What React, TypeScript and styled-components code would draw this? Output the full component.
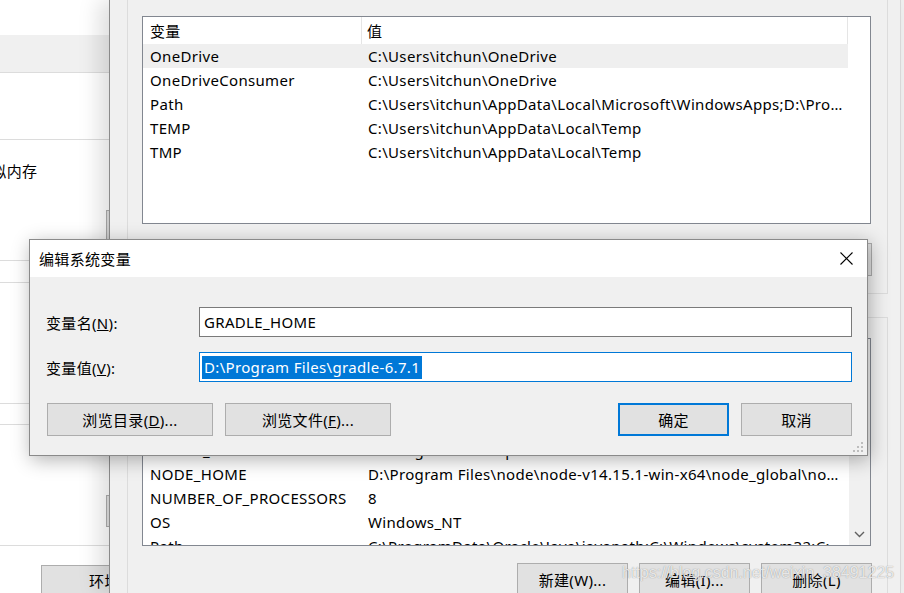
import styled, { createGlobalStyle } from 'styled-components';

const GlobalStyle = createGlobalStyle`
  html, body {
    margin: 0;
    padding: 0;
    background: #f0f0f0;
  }
  body {
    font-family: "Noto Sans", "Noto Sans CJK SC", sans-serif;
    font-size: 15px;
    letter-spacing: 0.33px;
    color: #000;
  }
  * {
    box-sizing: border-box;
  }
`;

const Desktop = styled.div`
  position: relative;
  width: 904px;
  height: 593px;
  overflow: hidden;
  background: #f0f0f0;
`;

// ---- system properties window, mostly hidden on the left ----
const BackWindow = styled.div`
  position: absolute;
  left: 0;
  top: 0;
  width: 110px;
  height: 593px;
  background: #fff;
  overflow: hidden;
  display: flex;
  flex-direction: column;
`;

const Strip = styled.div<{ $h: number; $gray?: boolean; $line?: boolean; $pt?: number }>`
  flex: none;
  height: ${(p) => p.$h}px;
  padding-top: ${(p) => p.$pt ?? 0}px;
  background: ${(p) => (p.$gray ? '#f0f0f0' : 'transparent')};
  border-bottom: ${(p) => (p.$line ? '1px solid #dcdcdc' : 'none')};
  display: flex;
  align-items: ${(p) => (p.$pt ? 'flex-start' : 'center')};
  white-space: nowrap;
`;

const BackText = styled.span`
  margin-left: -24px;
`;

const EdgeButton = styled.div<{ $h: number }>`
  flex: none;
  margin-left: 106px;
  width: 90px;
  height: ${(p) => p.$h}px;
  border: 1px solid #adadad;
  background: #e1e1e1;
`;

const BackButton = styled.div`
  flex: none;
  margin-left: 41px;
  width: 192px;
  height: 30px;
  border: 1px solid #adadad;
  background: #e1e1e1;
  display: flex;
  align-items: center;
  justify-content: center;
`;

// ---- environment variables window ----
const EnvWindow = styled.div`
  position: absolute;
  left: 109px;
  top: 0;
  width: 792px;
  height: 593px;
  background: #f0f0f0;
  border-left: 1px solid #8a8a8a;
  border-right: 1px solid #d8d8d8;
  box-shadow: -10px 0 20px rgba(0, 0, 0, 0.13);
  padding: 0 12px 0 17px;
  display: flex;
  flex-direction: column;
`;

const Group = styled.div<{ $mt: number; $pt: number; $h?: number }>`
  position: relative;
  flex: none;
  margin-top: ${(p) => p.$mt}px;
  padding: ${(p) => p.$pt}px 16px 0 14px;
  height: ${(p) => (p.$h ? `${p.$h}px` : 'auto')};
  border: 1px solid #dcdcdc;
  display: flex;
  flex-direction: column;
`;

const Legend = styled.span`
  position: absolute;
  top: -16px;
  left: 10px;
  padding: 0 3px;
  background: #f0f0f0;
  white-space: nowrap;
`;

const ListBox = styled.div`
  flex: none;
  height: 208px;
  border: 1px solid #828790;
  background: #fff;
  overflow: hidden;
  display: flex;
`;

const ListBody = styled.div`
  flex: 1;
  min-width: 0;
  display: flex;
  flex-direction: column;
`;

const HeaderRow = styled.div`
  flex: none;
  display: flex;
  height: 27px;
  width: 705px;
`;

const HeaderCell = styled.div<{ $w: number; $pl: number }>`
  flex: none;
  width: ${(p) => p.$w}px;
  padding-left: ${(p) => p.$pl}px;
  border-right: 1px solid #e5e5e5;
  display: flex;
  align-items: center;
`;

const Row = styled.div<{ $active?: boolean }>`
  flex: none;
  display: flex;
  height: 24px;
  width: 705px;
  background: ${(p) => (p.$active ? '#efefef' : 'transparent')};
`;

const Cell = styled.div<{ $w: number; $pl: number }>`
  flex: none;
  width: ${(p) => p.$w}px;
  padding: 0 4px 0 ${(p) => p.$pl}px;
  line-height: 24px;
  white-space: nowrap;
  overflow: hidden;
  text-overflow: ellipsis;
`;

const ScrollBar = styled.div`
  flex: none;
  width: 21px;
  background: #f0f0f0;
  display: flex;
  flex-direction: column;
  justify-content: flex-end;
  align-items: center;
`;

const ScrollArrow = styled.div`
  height: 22px;
  width: 21px;
  display: flex;
  align-items: center;
  justify-content: center;
`;

const ButtonRow = styled.div<{ $mt: number }>`
  flex: none;
  display: flex;
  justify-content: flex-end;
  gap: 11px;
  margin-top: ${(p) => p.$mt}px;
  margin-right: -1px;
`;

const WinButton = styled.div<{ $w: number; $primary?: boolean }>`
  flex: none;
  width: ${(p) => p.$w}px;
  height: 33px;
  border: ${(p) => (p.$primary ? '2px solid #0078d7' : '1px solid #adadad')};
  background: #e1e1e1;
  display: flex;
  align-items: center;
  justify-content: center;
  white-space: nowrap;
`;

// ---- edit dialog ----
const Dialog = styled.div`
  position: absolute;
  left: 29px;
  top: 239px;
  width: 839px;
  height: 217px;
  border: 1px solid #8a8a8a;
  background: #f0f0f0;
  box-shadow: 2px 4px 18px rgba(0, 0, 0, 0.3);
  display: flex;
  flex-direction: column;
`;

const TitleBar = styled.div`
  flex: none;
  height: 37px;
  background: #fff;
  display: flex;
  align-items: center;
  justify-content: space-between;
  padding: 0 14px 0 9px;
`;

const DialogBody = styled.div`
  flex: 1;
  padding: 30px 15px 0 16px;
  display: flex;
  flex-direction: column;
  gap: 15px;
`;

const FormRow = styled.div`
  display: grid;
  grid-template-columns: 153px 1fr;
  align-items: center;
  height: 30px;
`;

const Field = styled.div<{ $focused?: boolean }>`
  height: 30px;
  border: 1px solid ${(p) => (p.$focused ? '#0078d7' : '#7a7a7a')};
  background: #fff;
  padding-left: 4px;
  display: flex;
  align-items: center;
  white-space: nowrap;
`;

const Selected = styled.span`
  margin-left: -2px;
  padding: 0 2px;
  line-height: 23px;
  background: #0078d7;
  color: #fff;
`;

const DialogButtons = styled.div`
  display: flex;
  gap: 12px;
  margin-top: 6px;
  padding-left: 1px;
`;

const Spacer = styled.div`
  flex: 1;
`;

const Grip = styled.svg`
  position: absolute;
  right: 3px;
  bottom: 2px;
`;

const Watermark = styled.div`
  position: absolute;
  left: 622px;
  top: 564px;
  font-family: "Liberation Sans", Arial, sans-serif;
  font-size: 16px;
  letter-spacing: 0;
  color: rgba(255, 255, 255, 0.8);
  text-shadow: 0 0 1px rgba(90, 90, 90, 0.7);
  white-space: nowrap;
  pointer-events: none;
`;

type Variable = { name: string; value: string };

const userVars: Variable[] = [
  { name: 'OneDrive', value: 'C:\\Users\\itchun\\OneDrive' },
  { name: 'OneDriveConsumer', value: 'C:\\Users\\itchun\\OneDrive' },
  {
    name: 'Path',
    value:
      'C:\\Users\\itchun\\AppData\\Local\\Microsoft\\WindowsApps;D:\\Program Files\\Microsoft VS Code\\bin',
  },
  { name: 'TEMP', value: 'C:\\Users\\itchun\\AppData\\Local\\Temp' },
  { name: 'TMP', value: 'C:\\Users\\itchun\\AppData\\Local\\Temp' },
];

const systemVars: Variable[] = [
  { name: 'ComSpec', value: 'C:\\Windows\\system32\\cmd.exe' },
  { name: 'DriverData', value: 'C:\\Windows\\System32\\Drivers\\DriverData' },
  { name: 'JAVA_HOME', value: 'D:\\Program Files\\Java\\jdk1.8.0_271' },
  { name: 'MAVEN_HOME', value: 'D:\\Program Files\\apache-maven-3.6.3' },
  {
    name: 'NODE_HOME',
    value: 'D:\\Program Files\\node\\node-v14.15.1-win-x64\\node_global\\node_modules',
  },
  { name: 'NUMBER_OF_PROCESSORS', value: '8' },
  { name: 'OS', value: 'Windows_NT' },
  {
    name: 'Path',
    value: 'C:\\ProgramData\\Oracle\\Java\\javapath;C:\\Windows\\system32;C:\\Windows;C:\\Windows\\System32\\Wbem',
  },
];

function VarList({ vars, scroll, activeIndex }: { vars: Variable[]; scroll?: boolean; activeIndex?: number }) {
  return (
    <ListBox>
      <ListBody>
        <HeaderRow>
          <HeaderCell $w={219} $pl={7}>变量</HeaderCell>
          <HeaderCell $w={486} $pl={5}>值</HeaderCell>
        </HeaderRow>
        {vars.map((v, i) => (
          <Row key={v.name + i} $active={i === activeIndex}>
            <Cell $w={219} $pl={7}>{v.name}</Cell>
            <Cell $w={486} $pl={6}>{v.value}</Cell>
          </Row>
        ))}
      </ListBody>
      {scroll && (
        <ScrollBar>
          <ScrollArrow>
            <svg width="11" height="7" viewBox="0 0 11 7">
              <path d="M1 1 L5.5 5.5 L10 1" fill="none" stroke="#606060" strokeWidth="1.4" />
            </svg>
          </ScrollArrow>
        </ScrollBar>
      )}
    </ListBox>
  );
}

export default function App() {
  return (
    <>
      <GlobalStyle />
      <Desktop>
        <BackWindow>
          <Strip $h={35} />
          <Strip $h={38} $gray $line />
          <Strip $h={67} $line />
          <Strip $h={60}>
            <BackText>虚拟内存</BackText>
          </Strip>
          <Strip $h={61} $pt={10} $line>
            <EdgeButton $h={50} />
          </Strip>
          <Strip $h={22} $line />
          <Strip $h={121} $line />
          <Strip $h={21} $line />
          <Strip $h={121} $pt={70} $line>
            <EdgeButton $h={32} />
          </Strip>
          <Strip $h={19} />
          <BackButton>环境变量(N)...</BackButton>
        </BackWindow>

        <EnvWindow>
          <Group $mt={-8} $pt={23} $h={302}>
            <Legend>itchun 的用户变量(U)</Legend>
            <VarList vars={userVars} activeIndex={0} />
            <ButtonRow $mt={19}>
              <WinButton $w={111}>新建(N)...</WinButton>
              <WinButton $w={111}>编辑(E)...</WinButton>
              <WinButton $w={111}>删除(D)</WinButton>
            </ButtonRow>
          </Group>
          <Group $mt={23} $pt={20}>
            <Legend>系统变量(S)</Legend>
            <VarList vars={systemVars} scroll />
            <ButtonRow $mt={17}>
              <WinButton $w={111}>新建(W)...</WinButton>
              <WinButton $w={111}>编辑(I)...</WinButton>
              <WinButton $w={111}>删除(L)</WinButton>
            </ButtonRow>
          </Group>
        </EnvWindow>

        <Dialog>
          <TitleBar>
            <span>编辑系统变量</span>
            <svg width="13" height="13" viewBox="0 0 13 13">
              <path d="M0.5 0.5 L12.5 12.5 M12.5 0.5 L0.5 12.5" stroke="#000" strokeWidth="1.1" />
            </svg>
          </TitleBar>
          <DialogBody>
            <FormRow>
              <span>
                变量名(<u>N</u>):
              </span>
              <Field>GRADLE_HOME</Field>
            </FormRow>
            <FormRow>
              <span>
                变量值(<u>V</u>):
              </span>
              <Field $focused>
                <Selected>D:\Program Files\gradle-6.7.1</Selected>
              </Field>
            </FormRow>
            <DialogButtons>
              <WinButton $w={166}>
                浏览目录(<u>D</u>)...
              </WinButton>
              <WinButton $w={166}>
                浏览文件(<u>F</u>)...
              </WinButton>
              <Spacer />
              <WinButton $w={111} $primary>
                确定
              </WinButton>
              <WinButton $w={111}>取消</WinButton>
            </DialogButtons>
          </DialogBody>
          <Grip width="11" height="11" viewBox="0 0 11 11">
            <g fill="#bdbdbd">
              <rect x="8" y="0" width="2" height="2" />
              <rect x="4" y="4" width="2" height="2" />
              <rect x="8" y="4" width="2" height="2" />
              <rect x="0" y="8" width="2" height="2" />
              <rect x="4" y="8" width="2" height="2" />
              <rect x="8" y="8" width="2" height="2" />
            </g>
          </Grip>
        </Dialog>

        <Watermark>https://blog.csdn.net/weixin_38491225</Watermark>
      </Desktop>
    </>
  );
}
